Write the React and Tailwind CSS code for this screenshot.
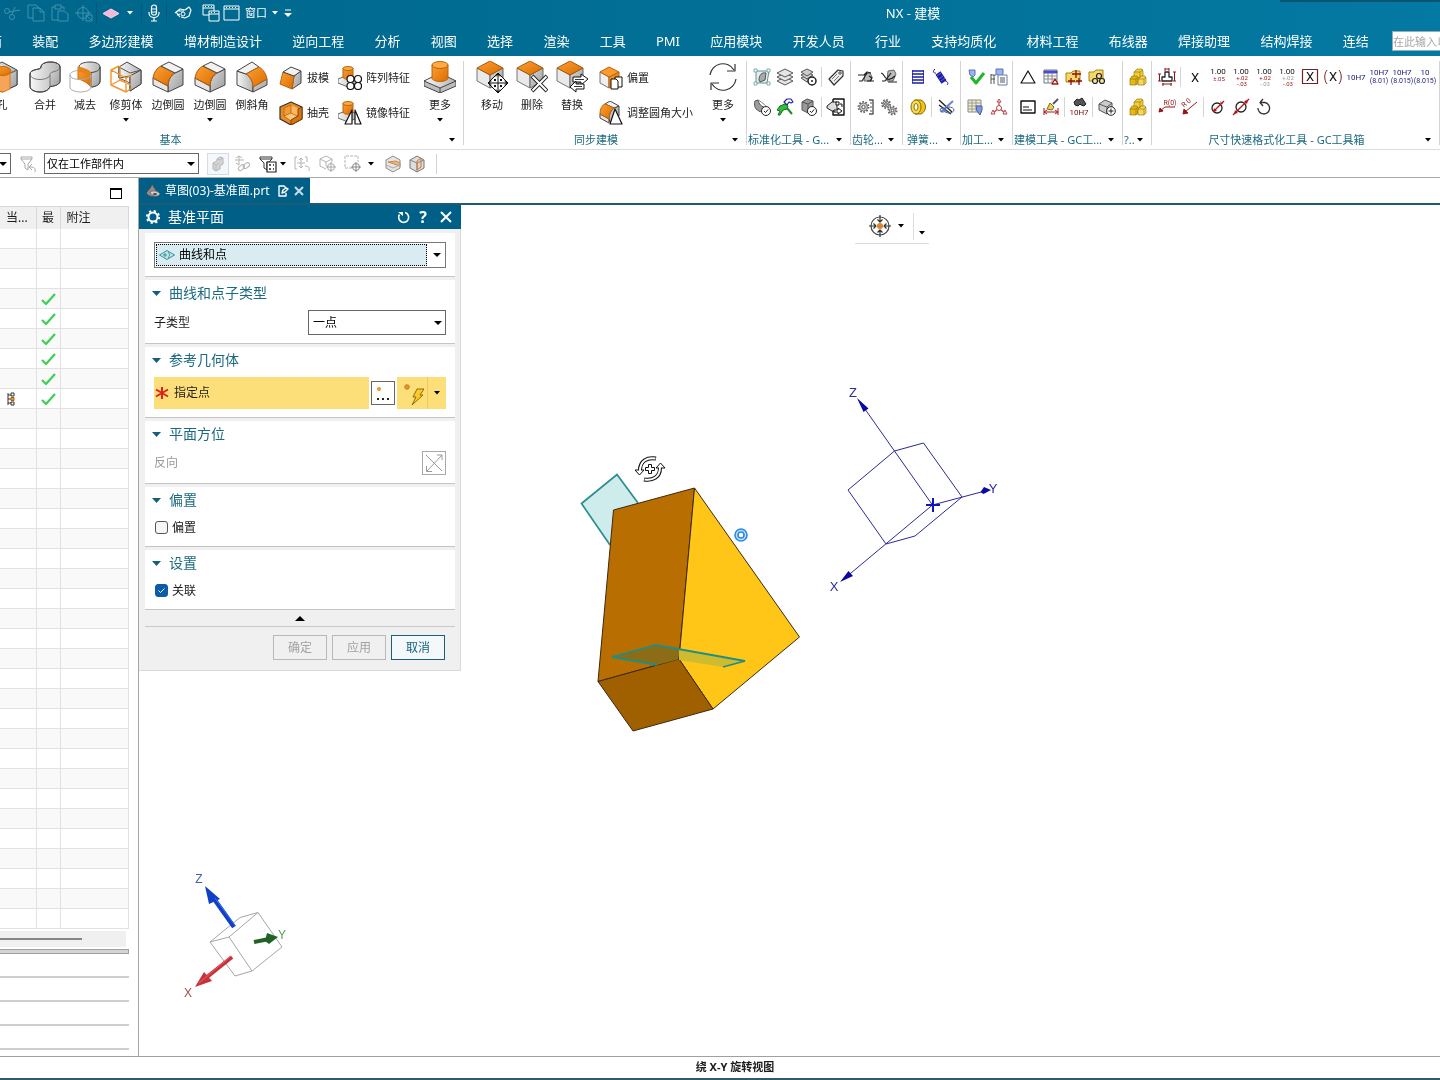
const MENUS = [
  '面', '装配', '多边形建模', '增材制造设计', '逆向工程', '分析', '视图', '选择', '渲染', '工具', 'PMI',
  '应用模块', '开发人员', '行业', '支持均质化', '材料工程', '布线器', '焊接助理', '结构焊接', '连结',
]

const ROWS = Array.from({ length: 35 }, (_, i) => ({
  done: i >= 3 && i <= 8,
  current: i === 8,
}))

function Defs() {
  return (
    <svg width="0" height="0" className="absolute" aria-hidden="true">
      <defs>
        <linearGradient id="metal" x1="0" x2="1" y1="0" y2="0">
          <stop offset="0" stopColor="#f7f7f7" />
          <stop offset="1" stopColor="#b4b4b4" />
        </linearGradient>
        <linearGradient id="steel" x1="0" x2="1" y1="0" y2="1">
          <stop offset="0" stopColor="#d9d9d9" />
          <stop offset="1" stopColor="#9c9c9c" />
        </linearGradient>
        <linearGradient id="amber" x1="0" x2="1" y1="0" y2="1">
          <stop offset="0" stopColor="#ffa033" />
          <stop offset="1" stopColor="#d96c00" />
        </linearGradient>
      </defs>
    </svg>
  )
}

function Svg({ size = 20, box, className = '', children }) {
  return (
    <svg
      width={size}
      height={size}
      viewBox={`0 0 ${box || size} ${box || size}`}
      className={`block shrink-0 ${className}`}
      fill="none"
      stroke="#444"
      strokeLinejoin="round"
      aria-hidden="true"
    >
      {children}
    </svg>
  )
}

function Caret({ className = 'text-black' }) {
  return (
    <svg width="6" height="4" viewBox="0 0 6 4" className={`block shrink-0 ${className}`} aria-hidden="true">
      <path d="M0 0h6L3 3.6z" fill="currentColor" />
    </svg>
  )
}

/* ---------- 32px ribbon icons ---------- */

function HoleIcon() {
  return (
    <Svg size={32}>
      <path d="M16 1 31 9v15l-15 7L1 24V9z" fill="url(#metal)" />
      <path d="M16 16v15l15-7V9z" fill="url(#steel)" />
      <path d="M1 9l15 7 15-7" stroke="#777" />
      <path d="M11 13v16l6 2 7-3V12z" fill="#f5a55a" stroke="#e07b12" />
      <ellipse cx="17" cy="10" rx="8" ry="4.500" fill="url(#amber)" stroke="#c96a0a" />
    </Svg>
  )
}

function UniteIcon() {
  return (
    <Svg size={32}>
      <path d="M1 13v12c0 3.500 4 6 10 6 5 0 9-2 10-5.500 6-.5 10-2.500 10-5.500V6c0-3-4-5-9.500-5S12 3 12 6c0 2-3 2-5.500 2.700C3 9.500 1 11 1 13z" fill="url(#metal)" />
      <path d="M21 14v11.500c6-.5 10-2.500 10-5.500V6c0 5-10 4-10 8z" fill="url(#steel)" stroke="none" />
      <path d="M1 13c0 3 4 5.500 10 5.500 5 0 10-2 10-5 0-3.500 10-2.500 10-7.500M21 14v11.500" stroke="#777" />
      <path d="M1 13v12c0 3.500 4 6 10 6 5 0 9-2 10-5.500 6-.5 10-2.500 10-5.500V6c0-3-4-5-9.500-5S12 3 12 6c0 2-3 2-5.500 2.700C3 9.500 1 11 1 13z" stroke="#444" />
    </Svg>
  )
}

function SubtractIcon() {
  return (
    <Svg size={32}>
      <path d="M10 6c0-3 4.500-5 11-5s10 2 10 5v14c0 3-3 5-8 6V16c0-4-6-6-13-6z" fill="url(#metal)" />
      <path d="M31 6c0 3-3 5-9 5.500V26c6-.5 9-3 9-6z" fill="url(#steel)" />
      <path d="M9 6c2 2 6 3 8 5 3 1 5 2 5 4v11c-3-4-8-7-13-8z" fill="url(#amber)" stroke="#cc6c08" />
      <path d="M9 6c4 0 11 2 13 5.500V15c-4-2-9-4-13-4z" fill="#e8821a" stroke="none" />
      <path d="M1 14c0 3 5 4.500 10.500 4.500S22 17 22 14v12c0 3-5 5-10.500 5S1 29 1 26zM1 14c0-2.500 3-4 8-4.500" stroke="#aaa" />
    </Svg>
  )
}

function TrimIcon() {
  return (
    <Svg size={32}>
      <path d="M9 6 17 1l14 8v14l-11 7V15L9 17z" fill="url(#metal)" />
      <path d="M20 15 31 9v14l-11 7z" fill="url(#steel)" />
      <path d="M9 6l11 6 11-3M9 6v11l11 5" stroke="#555" />
      <path d="M1 9l8-4M1 9v15l15 7V17zM16 17l6-3M16 31l6-4M1 24l9-5 11 5M10 5v14" stroke="#f0962c" strokeWidth="1.400" />
    </Svg>
  )
}

function BlendIcon({ size = 32 }) {
  return (
    <Svg size={size} box={32}>
      <path d="M16 31v-6c0-6 3-11 7-13l8-4v16z" fill="url(#steel)" />
      <path d="M1 17l15 8v6L1 24z" fill="#e6e6e6" />
      <path d="M1 17C2 11 5 7 9 5l14 7c-4 2-7 7-7 13z" fill="url(#amber)" stroke="#a85a0c" />
      <path d="M9 5l8-4 14 7-8 4z" fill="#f2f2f2" />
    </Svg>
  )
}

function ChamferIcon() {
  return (
    <Svg size={32}>
      <path d="M1 10l9 3c5 3 7 8 7 13v5L1 24z" fill="url(#metal)" />
      <path d="M1 10 16 1l7 5-13 7z" fill="#f2f2f2" />
      <path d="M17 26l14-8v6l-14 7z" fill="url(#steel)" />
      <path d="M10 13l13-7c5 3 7 7 8 12l-14 8c0-5-2-10-7-13z" fill="url(#amber)" stroke="#b8630c" />
    </Svg>
  )
}

function BossIcon({ size = 32 }) {
  return (
    <Svg size={size} box={32}>
      <path d="M0 20v5l16 7 16-7v-5z" fill="#bdbdbd" />
      <path d="M16 12l16 8-16 7-16-7z" fill="url(#metal)" />
      <path d="M16 27v5" />
      <path d="M8 4v13c0 2 4 3.500 8 3.500s8-1.500 8-3.500V4z" fill="url(#amber)" stroke="#b8630c" />
      <ellipse cx="16" cy="4" rx="8" ry="3.500" fill="#ffab42" stroke="#b8630c" />
    </Svg>
  )
}

function FaceCube() {
  return (
    <>
      <path d="M1 7v13l13 7V14z" fill="#e9e9e9" stroke="#777" />
      <path d="M27 7v13l-13 7V14z" fill="url(#steel)" stroke="#666" />
      <path d="M14 0l13 7-13 7L1 7z" fill="url(#amber)" stroke="#a85a0c" />
    </>
  )
}

function MoveFaceIcon() {
  return (
    <Svg size={32}>
      <FaceCube />
      <path d="M22 12l10 10-10 10-10-10z" fill="#fff" stroke="#111" />
      <path d="M22 13v18M13 22h18M20 15.500l2-2.500 2 2.500M20 28.500l2 2.500 2-2.500M15.500 20 13 22l2.500 2M28.500 20l2.500 2-2.500 2" stroke="#111" />
      <path d="M18 18h2v2h-2zM24 18h2v2h-2zM18 24h2v2h-2zM24 24h2v2h-2z" fill="#111" stroke="none" />
    </Svg>
  )
}

function DeleteFaceIcon() {
  return (
    <Svg size={32}>
      <FaceCube />
      <path d="M16 15l15 15M31 15 16 30" stroke="#222" strokeWidth="4" />
      <path d="M16.500 15.500l14 14M30.500 15.500l-14 14" stroke="#fff" strokeWidth="2" />
    </Svg>
  )
}

function ReplaceFaceIcon() {
  return (
    <Svg size={32}>
      <FaceCube />
      <path d="M17 16h8v-3l7 5-7 6v-3h-8z" fill="#fff" stroke="#111" />
      <path d="M28 23h-8v-3l-6 6 6 5v-3h8z" fill="#fff" stroke="#111" />
      <path d="M19 18.500h9M18 25.500h8" stroke="#333" />
    </Svg>
  )
}

function RefreshIcon() {
  return (
    <Svg size={32}>
      <g stroke="#333" strokeWidth="1.200">
        <path d="M3 14A13 13 0 0 1 27 9M29 18A13 13 0 0 1 5 23" />
        <path d="M28 3v7h-8M4 29v-7h8" />
      </g>
    </Svg>
  )
}

/* ---------- 24px ribbon icons ---------- */

function DraftIcon() {
  return (
    <Svg size={24}>
      <path d="M15 10l7-5v12l-9 6z" fill="url(#steel)" />
      <path d="M4 6l11 4-2 13L1 18z" fill="url(#amber)" stroke="#b8630c" />
      <path d="M4 6l8-5 10 4-7 5z" fill="#f2f2f2" />
    </Svg>
  )
}

function ShellIcon() {
  return (
    <Svg size={24}>
      <path d="M12 1l11 5v12l-11 6L1 18V6z" fill="#e98a22" stroke="#333" strokeWidth="1.200" />
      <path d="M12 4l8 4-1 6-7 4-7-4V7z" fill="#ffb65e" stroke="none" />
      <path d="M5 7l7-3v7c0 2-1 2-2 3l-5 1z" fill="#f39a38" stroke="#b8630c" strokeWidth=".8" />
      <path d="M5 15l7-3 8 4-8 4z" fill="#ffc67f" stroke="#b8630c" strokeWidth=".8" />
      <path d="M19 8l4-2v12l-11 6v-5l7-4z" fill="#d9750f" stroke="#7d4208" />
    </Svg>
  )
}

function PatternIcon() {
  return (
    <Svg size={24}>
      <path d="M0 13l10-4 9 4v4l-9 4-10-4z" fill="url(#metal)" stroke="#666" />
      <path d="M5 2v9c0 3 10 3 10 0V2z" fill="url(#amber)" stroke="#b8630c" />
      <ellipse cx="10" cy="2.500" rx="5" ry="2" fill="#ffab42" stroke="#b8630c" />
      <g fill="#fff" stroke="#111" strokeWidth="1.200">
        <circle cx="12.500" cy="13" r="3.500" />
        <circle cx="20" cy="13" r="3.500" />
        <circle cx="12.500" cy="20" r="3.500" />
        <circle cx="20" cy="20" r="3.500" />
      </g>
    </Svg>
  )
}

function MirrorIcon() {
  return (
    <Svg size={24}>
      <path d="M0 13l10-4 9 4v4l-9 4-10-4z" fill="url(#metal)" stroke="#666" />
      <path d="M5 2v9c0 3 10 3 10 0V2z" fill="url(#amber)" stroke="#b8630c" />
      <ellipse cx="10" cy="2.500" rx="5" ry="2" fill="#ffab42" stroke="#b8630c" />
      <path d="M14 9v14H7zM17 9v14h6z" fill="#fff" stroke="#111" strokeWidth="1.200" />
    </Svg>
  )
}

function OffsetIcon() {
  return (
    <Svg size={24}>
      <path d="M1 6v11l9 5V11z" fill="#eee" stroke="#777" />
      <path d="M20 6v11l-10 5V11z" fill="url(#amber)" stroke="#b8630c" />
      <path d="M10 1l10 5-10 5-9-5z" fill="#ff9a2e" stroke="#b8630c" />
      <path d="M16 11h7v10h-7z" fill="#fff" stroke="#111" />
      <path d="M12 13h5l2 2v8h-7z" fill="#fff" stroke="#111" />
    </Svg>
  )
}

function ResizeBlendIcon() {
  return (
    <Svg size={24}>
      <path d="M10 18c0-5 2-9 5-11l5-2v10l-9 6z" fill="url(#steel)" />
      <path d="M1 13l9 5v4l-9-5z" fill="#e6e6e6" />
      <path d="M6 3l5-3 9 5-5 2z" fill="#f2f2f2" />
      <path d="M1 13C1 8 3 4 6 3l9 4c-3 2-5 6-5 11z" fill="url(#amber)" stroke="#b8630c" />
      <path d="M16 8l-5 15h12z" fill="#fff" stroke="#111" strokeWidth="1.200" />
    </Svg>
  )
}

/* ---------- small tool icons, 18px grid ---------- */

const Gear = ({ x, y, r }) => (
  <g>
    <circle cx={x} cy={y} r={r} strokeWidth="2" strokeDasharray="1.600 1.500" stroke="#666" />
    <circle cx={x} cy={y} r={r - 1} fill="#cfcfcf" stroke="#777" />
    <circle cx={x} cy={y} r={r / 3} fill="#fff" stroke="#555" />
  </g>
)

const CheckBadge = () => (
  <>
    <circle cx="13" cy="13" r="4.500" fill="#fff" stroke="#222" />
    <path d="M11 13l1.500 1.600 2.700-3.200" stroke="#222" />
  </>
)

const GoldBoxes = () => (
  <g stroke="#8a6a00" strokeWidth=".6">
    <path d="M5 4l3-3h5l1 2v5l-3 2H5z" fill="#f3cf3c" />
    <path d="M1 11l2-3h5l1 2v5l-2 2H1z" fill="#e6b913" />
    <path d="M9 11l3-3h4l1 2v5l-2 2H9z" fill="#f6d95c" />
    <path d="M5 4h6v6M1 11h6v6M9 11h6v6M11 4l3-2M7 11l2-2M15 11l2-2" />
  </g>
)

function Small({ x, y, size, fill = '#111', children }) {
  return (
    <text x={x} y={y} fontSize={size} fill={fill} stroke="none" textAnchor="middle" fontFamily="Roboto, sans-serif">
      {children}
    </text>
  )
}

function Tolerance({ lower, tones = ['#9a1414', '#9a1414'] }) {
  return (
    <>
      <Small x={9} y={6} size={8}>1.00</Small>
      {lower.map((t, i) => (
        <Small key={t} x={10} y={(lower.length === 1 ? 13 : 12) + i * 6} size={6} fill={tones[i]}>{t}</Small>
      ))}
    </>
  )
}

function Fit({ top, lower }) {
  return (
    <>
      <Small x={9} y={7} size={8} fill="#1a1a7a">{top}</Small>
      <Small x={9} y={15} size={7} fill="#1a1a7a">{lower}</Small>
    </>
  )
}

const TOOL = {
  sketchRect: (
    <>
      <path d="M3 3h13l-2 12H3z" fill="#e3efef" stroke="#5c9696" />
      <path d="M6 12c0-5 3-8 7-7l-1 7-5 2z" fill="#aaa" stroke="#555" />
      <path d="M1 1h3v3H1zM14 1h3v3h-3zM1 14h3v3H1zM14 14h3v3h-3z" fill="#fff" stroke="#6a9a9a" strokeWidth=".8" />
    </>
  ),
  layers: (
    <g stroke="#555" fill="#e6e6e6">
      <path d="M9 9l8 4-8 4-8-4z" />
      <path d="M9 5l8 4-8 4-8-4z" />
      <path d="M9 1l8 4-8 4-8-4z" />
    </g>
  ),
  layersGear: (
    <>
      <g stroke="#555" fill="#ccc">
        <path d="M8 7l6 3-6 4-6-4z" />
        <path d="M8 4l6 3-6 4-6-4z" />
        <path d="M8 1l6 3-6 4-6-4z" />
      </g>
      <circle cx="13" cy="13" r="4" fill="#fff" stroke="#222" strokeWidth="1.500" />
      <circle cx="13" cy="13" r="1" fill="#222" stroke="none" />
    </>
  ),
  tag: (
    <>
      <path d="M2 11 11 2l5 1v5l-9 9z" fill="#eee" stroke="#333" strokeWidth="1.200" />
      <circle cx="13" cy="5" r="1.200" />
      <path d="M5 11l5-5M7 13l5-5" stroke="#777" />
    </>
  ),
  coneCheck: (
    <>
      <path d="M2 3C0 9 4 14 10 14l4-4C8 9 6 6 5 2z" fill="#9c9c9c" stroke="#555" />
      <path d="M5 2c2 1 8 5 9 8" stroke="#777" />
      <CheckBadge />
    </>
  ),
  greenArm: (
    <>
      <path d="M8 4l3-3h4l2 3-2 1-2-1-2 3z" fill="#fff" stroke="#2424a8" strokeWidth="1.200" />
      <path d="M1 12 4 8l5-2 3 2-1 3-4 1-3 5H2l2-4z" fill="#2fbf3a" stroke="#146b1c" />
      <path d="M11 10l5 6" stroke="#1d8a28" strokeWidth="2" />
    </>
  ),
  boxCheck: (
    <>
      <path d="M3 4l5-3 6 2v9l-5 3-6-3z" fill="#999" stroke="#555" />
      <path d="M3 4l6 2 5-3M9 6v9" stroke="#555" />
      <CheckBadge />
    </>
  ),
  tagExport: (
    <>
      <path d="M0 8l5-4h5v9H5L0 10z" fill="#ddd" stroke="#222" />
      <path d="M6 1h11v16H6v-4M6 4V1" stroke="#111" strokeWidth="1.400" />
      <path d="M9 4h3v3H9zM13 6h2v3M7 12h4v-2l4 3-4 3v-2H7z" fill="#fff" stroke="#111" />
    </>
  ),
  shaftA: (
    <g stroke="#222">
      <path d="M8 6l5-1 2 4-1 4H7z" fill="#bbb" stroke="#666" />
      <path d="M1 7h6l3-3 4 1M10 13h7M2 13h3l5-8M12 8l3 2-2 3" strokeWidth="1.200" />
    </g>
  ),
  shaftB: (
    <g stroke="#222">
      <path d="M8 3l6-1 2 4-3 7H7z" fill="#bbb" stroke="#666" />
      <path d="M1 5c3 0 3 5 6 6s5 0 8-3M2 13h3l6-8M8 14h9" strokeWidth="1.200" />
    </g>
  ),
  gearRack: (
    <>
      <Gear x={6.5} y={9} r={5} />
      <path d="M12 2h4v14h-4" stroke="#555" strokeWidth="1.400" />
      <path d="M13 5h2M13 9h2M13 13h2" stroke="#555" />
    </>
  ),
  gears: (
    <>
      <Gear x={6} y={6} r={4} />
      <Gear x={12.5} y={12.5} r={4} />
    </>
  ),
  coil: (
    <g stroke="#1c1ca8" strokeWidth="1.600">
      <path d="M3 3h12M3 6h12M3 9h12M3 12h12M3 15h12" />
      <path d="M3.500 2v13M14.500 2v13" strokeWidth=".8" />
    </g>
  ),
  spring: (
    <g stroke="#1c1ca8">
      <path d="M3 1c-3 2-1 5 1 4M15 17c2-2 0-4-2-4" />
      <path d="M6 5 12 14" strokeWidth="6" />
      <path d="M5 8l4-3M7 11l4-3M9 13l4-3" stroke="#7a7ae0" strokeWidth=".8" />
    </g>
  ),
  goldRoll: (
    <>
      <path d="M6 2h6c6 3 6 11 0 14H6z" fill="#f0c419" stroke="#8a6a00" />
      <ellipse cx="7" cy="9" rx="5" ry="7" fill="#f8dc4a" stroke="#8a6a00" />
      <ellipse cx="7" cy="9" rx="2" ry="3.500" fill="#fff" stroke="#8a6a00" />
    </>
  ),
  cutSpring: (
    <>
      <path d="M2 2l13 12M2 7l12 9" stroke="#222" strokeWidth="1.400" />
      <path d="M16 3 4 14" stroke="#6c86c8" strokeWidth="2" />
      <ellipse cx="12" cy="12" rx="5" ry="3" stroke="#4c68b0" />
      <ellipse cx="6" cy="12" rx="3" ry="2" stroke="#4c68b0" />
    </>
  ),
  checkTool: (
    <>
      <path d="M2 2h6v5l-2 2-3-2z" fill="#9fb4ea" stroke="#5a70b8" />
      <path d="M4 9l5 6 8-10" stroke="#22b52c" strokeWidth="3" />
    </>
  ),
  sheetTool: (
    <>
      <path d="M6 1h7v5l-3 2-4-2z" fill="#9fb4ea" stroke="#5a70b8" />
      <path d="M8 7h9v10H8z" fill="#fff" stroke="#667ab0" />
      <path d="M10 10h5M10 12h5M10 14h5M1 6v10M1 7h5M4 7v9M1 11h4" stroke="#555" />
    </>
  ),
  tableTool: (
    <>
      <path d="M1 2h13v12H1z" fill="#f3f0c8" stroke="#888" />
      <path d="M1 5h13M1 8h13M1 11h13M5 2v12M9 2v12" stroke="#999" />
      <path d="M9 8h6v4l-2 5-3-4z" fill="#7f96e0" stroke="#4a5cb0" />
    </>
  ),
  triadRed: (
    <g stroke="#b8434c">
      <path d="M9 9V2M9 10l-6 5M9 10l6 5" strokeWidth="1.200" />
      <path d="M7 4l2-3 2 3zM3 12l-2 4h4zM15 12l2 4h-4z" fill="#fff" />
      <circle cx="9" cy="10" r="2.500" fill="#fff" />
    </g>
  ),
  triangle: <path d="M9 3l7 12H2z" stroke="#111" strokeWidth="1.200" />,
  tableRed: (
    <>
      <path d="M2 2h13v13H2z" fill="#fff" stroke="#777" />
      <path d="M2 3h13v2H2z" fill="#4a4ad0" stroke="#4a4ad0" />
      <path d="M2 8h13M2 11h13M6 5v10M10 5v10" stroke="#888" />
      <path d="M13 11l3 5h-6z" fill="#fff" stroke="#b01515" strokeWidth="1.300" />
    </>
  ),
  folderStar: (
    <>
      <path d="M1 5h5l2-2h7v11H1z" fill="#f7d66a" stroke="#a98210" />
      <path d="M11 2v8M7 6h9M6 10v7M3 13h7M14 10v7M11 13h6" stroke="#8c1111" strokeWidth="1.300" />
    </>
  ),
  folderLink: (
    <>
      <path d="M1 4h5l2-2h7v11H1z" fill="#f7d66a" stroke="#a98210" />
      <g stroke="#222" strokeWidth="1.200" fill="#f3e3a0">
        <circle cx="11" cy="8" r="2.500" />
        <circle cx="7" cy="13" r="2.500" />
        <circle cx="14" cy="13" r="2.500" />
      </g>
    </>
  ),
  noteBox: (
    <>
      <path d="M2 3h14v12H2z" stroke="#111" strokeWidth="1.400" />
      <path d="M4 9h6M4 12h9" stroke="#111" strokeWidth="1.200" />
    </>
  ),
  dimBrush: (
    <>
      <path d="M16 1l-5 5" stroke="#556" strokeWidth="2" />
      <path d="M8 5l4 4-2 3-5-1z" fill="#e8cf62" stroke="#806a10" />
      <path d="M2 10v7M16 10v7M2 14h14M5 12l-3 2 3 2M13 12l3 2-3 2" stroke="#b01515" />
    </>
  ),
  binocular: (
    <>
      <path d="M4 4l3-3 2 1 3-2 2 3 2 3-2 2-3-1-1-1-2 2-3-1z" fill="#555" stroke="#222" />
      <Small x={9} y={17} size={8} fill="#7a0c0c">10H7</Small>
    </>
  ),
  cubeAdd: (
    <>
      <path d="M1 6l6-4 7 3v8l-5 3-8-4z" fill="#ccc" stroke="#555" />
      <path d="M1 6l8 3 5-4M9 9v7" stroke="#555" />
      <circle cx="13" cy="13" r="4.300" fill="#fff" stroke="#222" />
      <path d="M13 10.500v5M10.500 13h5" stroke="#222" />
    </>
  ),
  gold: <GoldBoxes />,
  dimension: (
    <>
      <path d="M7 4h4v5h3v4H4V9h3z" fill="#fff" stroke="#222" strokeWidth="1.300" />
      <path d="M7 1h4M7 0v3M11 0v3M0 6h3M0 13h3M1.500 6v7M15 4h3M15 13h3M16.500 4v9M4 16h10M5 15v3M13 15v3" stroke="#9a1414" />
    </>
  ),
  plainX: <Small x={9} y={14} size={13}>X</Small>,
  boxedX: (
    <>
      <path d="M1.500 1.500h15v14h-15z" stroke="#7a1f1f" strokeWidth="1.200" />
      <Small x={9} y={13} size={13}>X</Small>
    </>
  ),
  parenX: (
    <>
      <path d="M3 2C0 6 0 12 3 16M15 2c3 4 3 10 0 14" stroke="#7a1f1f" />
      <Small x={9} y={13} size={13}>X</Small>
    </>
  ),
  tolEqual: <Tolerance lower={['±.05']} />,
  tolBoth: <Tolerance lower={['+.02', '-.03']} />,
  tolUpper: <Tolerance lower={['+.02', '-.03']} tones={['#9a1414', '#999']} />,
  tolLower: <Tolerance lower={['+.02', '-.03']} tones={['#999', '#9a1414']} />,
  fit: <Small x={9} y={12} size={8} fill="#1a1a7a">10H7</Small>,
  fitTol: <Fit top="10H7" lower="(8.01)" />,
  fitTol2: <Fit top="10H7" lower="(8.015)" />,
  fitTol3: <Fit top="10" lower="(8.015)" />,
  leaderBox: (
    <>
      <Small x={12} y={7} size={7} fill="#9a1414">R(0)</Small>
      <path d="M17 9H7l-5 4" stroke="#9a1414" />
      <path d="M1 14l1-4 3 3z" fill="#9a1414" stroke="#9a1414" />
    </>
  ),
  leaderSlant: (
    <>
      <path d="M16 4 4 14" stroke="#9a1414" />
      <path d="M2 16l1-5 4 4z" fill="#9a1414" stroke="#9a1414" />
      <g transform="rotate(-42 8 8)"><Small x={8} y={6} size={7} fill="#9a1414">R 0</Small></g>
    </>
  ),
  diaIn: (
    <>
      <circle cx="8" cy="10" r="5" stroke="#222" strokeWidth="1.300" />
      <path d="M5 13 15 3" stroke="#b01515" strokeWidth="1.200" />
      <path d="M4 14l1-4 3 3zM12 6l-1-3 3 3z" fill="#b01515" stroke="none" />
    </>
  ),
  diaOut: (
    <>
      <circle cx="9" cy="9" r="5" stroke="#222" strokeWidth="1.300" />
      <path d="M1 17 17 1" stroke="#b01515" strokeWidth="1.200" />
      <path d="M2 16l1-4 3 3zM16 2l-4 1 3 3z" fill="#b01515" stroke="none" />
    </>
  ),
  undo: (
    <>
      <path d="M5 4.500h5a5.800 5.800 0 1 1-7 5.500" stroke="#333" strokeWidth="1.300" />
      <path d="M8 1 5 4.500 8 8" stroke="#333" strokeWidth="1.300" />
    </>
  ),
}

/* ---------- ribbon ---------- */

function BigButton({ icon, label, menu, className = 'w-10' }) {
  return (
    <button type="button" className={`flex shrink-0 flex-col items-center pt-[5px] ${className}`}>
      {icon}
      <span className="mt-1 h-4 text-[11px] leading-4 whitespace-nowrap">{label}</span>
      {menu && <span className="mt-[5px]"><Caret /></span>}
    </button>
  )
}

function SmallButton({ icon, label }) {
  return (
    <button type="button" className="flex h-[35px] items-center gap-1 text-[11px] leading-4 whitespace-nowrap">
      {icon}
      {label}
    </button>
  )
}

function Group({ label, className, labelClass = 'text-center', children }) {
  return (
    <section className={`flex flex-col overflow-hidden ${className}`}>
      <div className="flex h-[76px] shrink-0">{children}</div>
      <div className="flex h-4 items-center pr-2">
        <span className={`min-w-0 flex-1 overflow-hidden text-[11px] leading-4 whitespace-nowrap text-[#1c6a80] ${labelClass}`}>{label}</span>
        <button type="button" aria-label={`${label} 选项`}><Caret /></button>
      </div>
    </section>
  )
}

function Divider() {
  return <div className="mt-[5px] mb-1 w-px shrink-0 bg-[#d4d4d4]" />
}

function ToolGrid({ rows }) {
  return (
    <div className="flex flex-col pt-[6px] pl-[3px]">
      {rows.map((row, r) => (
        <div key={r} className="flex h-[30px] items-center">
          {row.map((name, i) =>
            name === '|' ? (
              <span key={i} className="flex w-[5px] justify-center"><span className="h-5 w-px bg-[#d4d4d4]" /></span>
            ) : (
              <button key={i} type="button" aria-label={name} className="flex w-[23px] justify-center">
                <Svg size={18} className="overflow-visible">{TOOL[name]}</Svg>
              </button>
            ),
          )}
        </div>
      ))}
    </div>
  )
}

function Ribbon() {
  return (
    <div className="flex h-[94px] overflow-hidden border-b border-[#dcdcdc] bg-white">
      <Group label="基本" className="w-[463px] shrink-0" labelClass="pr-[108px] text-center">
        <BigButton icon={<HoleIcon />} label="孔" className="-ml-[21px] w-[46px]" />
        <BigButton icon={<UniteIcon />} label="合并" />
        <BigButton icon={<SubtractIcon />} label="减去" />
        <BigButton icon={<TrimIcon />} label="修剪体" menu className="w-[42px]" />
        <BigButton icon={<BlendIcon />} label="边倒圆" className="w-[42px]" />
        <BigButton icon={<BlendIcon />} label="边倒圆" menu className="w-[42px]" />
        <BigButton icon={<ChamferIcon />} label="倒斜角" className="w-[42px]" />
        <div className="ml-[6px] flex flex-col pt-1">
          <SmallButton icon={<DraftIcon />} label="拔模" />
          <SmallButton icon={<ShellIcon />} label="抽壳" />
        </div>
        <div className="mr-[10px] ml-[9px] flex flex-col pt-1">
          <SmallButton icon={<PatternIcon />} label="阵列特征" />
          <SmallButton icon={<MirrorIcon />} label="镜像特征" />
        </div>
        <BigButton icon={<BossIcon />} label="更多" menu />
      </Group>
      <Divider />
      <Group label="同步建模" className="w-[282px] shrink-0" labelClass="pr-1 text-center">
        <div className="ml-2 flex">
          <BigButton icon={<MoveFaceIcon />} label="移动" />
          <BigButton icon={<DeleteFaceIcon />} label="删除" />
          <BigButton icon={<ReplaceFaceIcon />} label="替换" />
        </div>
        <div className="mr-[10px] ml-[7px] flex flex-col pt-1">
          <SmallButton icon={<OffsetIcon />} label="偏置" />
          <SmallButton icon={<ResizeBlendIcon />} label="调整圆角大小" />
        </div>
        <BigButton icon={<RefreshIcon />} label="更多" menu />
      </Group>
      <Divider />
      <Group label="标准化工具 - G..." className="w-[103px] shrink-0" labelClass="pl-px">
        <ToolGrid rows={[['sketchRect', 'layers', 'layersGear', '|', 'tag'], ['coneCheck', 'greenArm', 'boxCheck', '|', 'tagExport']]} />
      </Group>
      <Divider />
      <Group label="齿轮..." className="w-[51px] shrink-0" labelClass="pl-px">
        <ToolGrid rows={[['shaftA', 'shaftB'], ['gearRack', 'gears']]} />
      </Group>
      <Divider />
      <Group label="弹簧..." className="w-[57px] shrink-0" labelClass="pl-1">
        <ToolGrid rows={[['coil', 'spring'], ['goldRoll', '|', 'cutSpring']]} />
      </Group>
      <Divider />
      <Group label="加工..." className="w-[51px] shrink-0" labelClass="pl-px">
        <ToolGrid rows={[['checkTool', 'sheetTool'], ['tableTool', 'triadRed']]} />
      </Group>
      <Divider />
      <Group label="建模工具 - GC工..." className="w-[109px] shrink-0" labelClass="pl-px">
        <ToolGrid rows={[['triangle', 'tableRed', 'folderStar', 'folderLink'], ['noteBox', 'dimBrush', '|', 'binocular', '|', 'cubeAdd']]} />
      </Group>
      <Divider />
      <Group label="?.." className="w-[28px] shrink-0" labelClass="pl-px">
        <ToolGrid rows={[['gold'], ['gold']]} />
      </Group>
      <Divider />
      <Group label="尺寸快速格式化工具 - GC工具箱" className="min-w-0 flex-1" labelClass="pr-1 text-center">
        <ToolGrid
          rows={[
            ['dimension', '|', 'plainX', 'tolEqual', 'tolBoth', 'tolUpper', 'tolLower', 'boxedX', 'parenX', 'fit', 'fitTol', 'fitTol2', 'fitTol3'],
            ['leaderBox', 'leaderSlant', '|', 'diaIn', 'diaOut', 'undo'],
          ]}
        />
      </Group>
      <Divider />
    </div>
  )
}

/* ---------- title bar ---------- */

function IconButton({ label, className = 'w-6', children }) {
  return (
    <button type="button" aria-label={label} className={`flex h-full shrink-0 items-center justify-center ${className}`}>
      {children}
    </button>
  )
}

function Header() {
  return (
    <header className="relative overflow-hidden bg-linear-to-r from-[#00668b] to-[#0479a2] text-white">
      <div className="absolute top-0 right-0 h-0.5 w-40 bg-[#0a5672]" />
      <div className="flex h-[26px] items-center">
        <div className="flex h-full items-center text-[#3f93ae]">
          <IconButton label="剪切">
            <Svg size={18}>
              <g stroke="currentColor"><circle cx="4" cy="7" r="2.500" /><circle cx="9" cy="13" r="2.500" /><path d="M6 8l11-2M9 10 12 3" /></g>
            </Svg>
          </IconButton>
          <IconButton label="复制">
            <Svg size={18}>
              <path d="M6 14H1V1h8l2 2v2M6 4h7l4 4v9H6zM13 4v4h4" stroke="currentColor" />
            </Svg>
          </IconButton>
          <IconButton label="粘贴">
            <Svg size={18}>
              <path d="M7 16H1V3h3V1h6v2h3v3M4 3v2h6V3M7 7h6l4 3v7H7z" stroke="currentColor" />
            </Svg>
          </IconButton>
          <IconButton label="移动">
            <Svg size={18}>
              <g stroke="currentColor"><circle cx="8" cy="9" r="5.500" /><path d="M8 1v16M0 9h16M11 11h6v6h-6zM12 12l4 4" /></g>
            </Svg>
          </IconButton>
        </div>
        <span className="h-5 w-px bg-[#00587a]" />
        <IconButton label="基准平面" className="w-7">
          <Svg size={16}><path d="M8 4l8 4.500L8 13 0 8.500z" fill="#f3b9d6" stroke="#f7d3e5" /></Svg>
        </IconButton>
        <IconButton label="更多平面" className="w-[10px]"><Caret className="text-white" /></IconButton>
        <span className="ml-[6px] h-5 w-px bg-[#00587a]" />
        <IconButton label="语音">
          <Svg size={18}>
            <g stroke="#fff" strokeWidth="1.200"><rect x="6.500" y="1" width="5" height="10" rx="2.500" /><path d="M4 8v1c0 6 10 6 10 0V8M9 14v3M6 17h6M7 5h4M7 8h4" /></g>
          </Svg>
        </IconButton>
        <span className="h-5 w-px bg-[#00587a]" />
        <IconButton label="触控" className="w-8">
          <Svg size={18}>
            <path d="M1 9l5-4 5 1 4-3 2 3-2 6-4 2-4-1M2 8l4 5M4 7h6M3 11l3-1" stroke="#fff" strokeWidth="1.200" />
            <circle cx="9" cy="10" r="2" stroke="#fff" />
          </Svg>
        </IconButton>
        <IconButton label="层叠窗口" className="w-6">
          <Svg size={18}>
            <path d="M1 1h11v10H1zM1 4h11M3 2.500h1M6 2.500h1M9 2.500h1" stroke="#fff" />
            <path d="M7 7h10v10H7z" fill="#006a8f" stroke="#fff" />
            <path d="M7 10h10M9 8.500h1M12 8.500h1" stroke="#fff" />
          </Svg>
        </IconButton>
        <button type="button" className="flex h-full items-center gap-1 text-[11px] leading-4">
          <Svg size={18}><path d="M1 2h15v14H1zM1 5h15M3 3.500h1M6 3.500h1M9 3.500h1M12 3.500h1" stroke="#fff" /></Svg>
          窗口
          <Caret className="ml-px text-white" />
        </button>
        <IconButton label="自定义" className="w-5">
          <Svg size={8}><path d="M1 1h6" stroke="#fff" /><path d="M0 4h8L4 8z" fill="#fff" stroke="none" /></Svg>
        </IconButton>
        <h1 className="flex-1 pl-[88px] text-center text-[13px] leading-5">NX - 建模</h1>
      </div>
      <div className="flex h-[30px] items-center">
        <nav className="-ml-[11px] flex min-w-0 flex-1 justify-between pr-[23px]">
          {MENUS.map((m) => (
            <a key={m} href="#" className="text-[13px] leading-5 whitespace-nowrap">{m}</a>
          ))}
        </nav>
        <input
          type="text"
          aria-label="搜索命令"
          placeholder="在此输入以搜索"
          className="h-5 w-12 border border-r-0 border-[#9ab] bg-white text-[11px] text-black placeholder:text-[#a8a8a8]"
        />
      </div>
    </header>
  )
}

/* ---------- selection bar ---------- */

function CaretLarge() {
  return (
    <svg width="8" height="4" viewBox="0 0 8 4" className="block" aria-hidden="true"><path d="M0 0h8L4 4z" /></svg>
  )
}

function Select({ label, value, className, selectClass = '' }) {
  return (
    <div className={`relative shrink-0 ${className}`}>
      <select aria-label={label} className={`block size-full appearance-none border border-[#666] bg-white leading-4 text-black ${selectClass}`}>
        <option>{value}</option>
      </select>
      <span className="pointer-events-none absolute inset-y-0 right-[4px] flex items-center"><CaretLarge /></span>
    </div>
  )
}

function SelectionBar() {
  return (
    <div className="flex h-7 items-center border-b border-[#aaa] bg-white">
      <Select label="类型过滤器" value="" className="-ml-[30px] h-[21px] w-[41px]" selectClass="pl-1 text-[11px]" />
      <IconButton label="重置过滤器" className="w-[33px]">
        <Svg size={18}>
          <path d="M2 2h11v2L9 9v6l-3-2V9L2 4zM2 4h11" stroke="#a8a8a8" />
          <path d="M16 17c1-4-1-5-5-5M13 9l-3 3 3 3" stroke="#a8a8a8" />
        </Svg>
      </IconButton>
      <Select label="选择范围" value="仅在工作部件内" className="h-[21px] w-[155px]" selectClass="pl-[2px] text-[11px]" />
      <button type="button" aria-label="整个装配" className="ml-2 flex size-[22px] items-center justify-center border border-[#d3dbe6] bg-[#f4f7fb]">
        <Svg size={16}>
          <path d="M3 7l4-2V3l3-2 3 1v6l-3 2v3l-4 2-3-2z" fill="#d6d6d6" stroke="#b4b4b4" />
          <path d="M3 7l3 2 4-2M7 3l3 1 3-2M6 9v6" stroke="#bbb" />
        </Svg>
      </button>
      <IconButton label="链接" className="w-[26px]">
        <Svg size={18}>
          <path d="M6 1v9M2 5h9M3 3l3-2 3 2M3 8l3 2" stroke="#b4b4b4" />
          <rect x="5" y="11" width="7" height="4" rx="2" transform="rotate(-40 8 13)" stroke="#b4b4b4" />
          <rect x="10" y="9" width="7" height="4" rx="2" transform="rotate(-40 13 11)" stroke="#b4b4b4" />
        </Svg>
      </IconButton>
      <IconButton label="过滤器列表" className="w-[25px]">
        <Svg size={18}>
          <path d="M1 2h12v2L10 7H8v8l-3-2V8L1 4zM1 4h12" stroke="#333" />
          <path d="M8 7h9v10H8z" fill="#fff" stroke="#222" strokeWidth="1.200" />
          <path d="M10 10h2M10 14h2M14 10h1M14 14h1" stroke="#222" strokeWidth="1.400" />
        </Svg>
      </IconButton>
      <Caret />
      <IconButton label="捕捉点" className="w-8">
        <Svg size={18}>
          <path d="M4 2H2v12h2M12 2h2v5M8 3v10M4 8h8M6 5l2-2 2 2M6 11l2 2 2-2" stroke="#b4b4b4" />
          <path d="M16 16c1-4-1-5-4-5" stroke="#b4b4b4" />
        </Svg>
      </IconButton>
      <IconButton label="捕捉体" className="w-5">
        <Svg size={18}>
          <path d="M1 4l6-3 6 3v3M1 4v7l6 3M1 4l6 3 6-3M7 7v4" stroke="#b4b4b4" />
          <circle cx="12" cy="12" r="3.500" stroke="#aaa" /><path d="M12 7v10M7 12h10" stroke="#aaa" />
        </Svg>
      </IconButton>
      <IconButton label="捕捉面" className="w-[30px]">
        <Svg size={18}>
          <path d="M8 13H1V1h13v6" stroke="#b4b4b4" strokeDasharray="3 1" />
          <circle cx="12" cy="12" r="3.500" stroke="#888" /><path d="M12 7v10M7 12h10" stroke="#888" />
        </Svg>
      </IconButton>
      <Caret />
      <IconButton label="截面" className="ml-[7px] w-6">
        <Svg size={18}>
          <path d="M9 1l7 4v8l-7 4-7-4V5z" fill="#e6e6e6" stroke="#8c8c8c" />
          <path d="M4 7l8-1 4 2v3z" fill="#f3b27a" stroke="#c98a50" />
          <path d="M2 10l7 3 7-3" stroke="#aaa" />
        </Svg>
      </IconButton>
      <IconButton label="编辑截面" className="w-6">
        <Svg size={18}>
          <path d="M9 1l7 4v8l-7 4-7-4V5z" fill="#ddd" stroke="#777" />
          <path d="M9 6l4-3v9l-4 3z" fill="#f6d0ac" stroke="#c57a38" />
          <path d="M2 5l7 3 7-3M9 8v9" stroke="#888" />
        </Svg>
      </IconButton>
      <span className="ml-[7px] h-5 w-px bg-[#d4d4d4]" />
    </div>
  )
}

/* ---------- left navigator ---------- */

function Navigator() {
  return (
    <aside className="flex w-[139px] shrink-0 flex-col border-r border-[#a6a6a6] bg-white pr-[9px]">
      <div className="flex h-[28px] items-center justify-end pt-[3px] pr-[7px]">
        <button type="button" aria-label="最大化" className="h-[11px] w-3 border border-t-2 border-black" />
      </div>
      <table className="w-[129px] table-fixed border-collapse text-xs">
        <thead>
          <tr className="h-[22px] border-t border-[#d8d8d8] bg-[#f0f0f0]">
            <th className="w-9 border-r border-[#d8d8d8] py-0 pr-0 pl-[6px] text-left leading-4 font-normal whitespace-nowrap">当...</th>
            <th className="w-6 border-r border-[#d8d8d8] p-0 leading-4 font-normal">最</th>
            <th className="border-r border-[#d8d8d8] py-0 pr-0 pl-[6px] text-left leading-4 font-normal">附注</th>
          </tr>
        </thead>
        <tbody>
          {ROWS.map((row, i) => (
            <tr key={i} className="h-5 border-b border-[#e2e2e2] even:bg-[#f9f9f9]">
              <td className="border-r border-[#e2e2e2] p-0 pl-[6px]">
                {row.current && (
                  <Svg size={14}>
                    <path d="M2 1v12M2 3h3M2 11h3M2 7h3" stroke="#333" />
                    <path d="M5 1h3v3H5zM5 10h3v3H5z" stroke="#333" />
                    <path d="M5 5.500h3v3H5z" fill="#f09a30" stroke="#a86010" />
                  </Svg>
                )}
              </td>
              <td className="border-r border-[#e2e2e2] p-0">
                {row.done && (
                  <Svg size={16} className="mx-auto"><path d="M2 9l4 4 9-10" stroke="#3fcf55" strokeWidth="2.200" /></Svg>
                )}
              </td>
              <td className="border-r border-[#e2e2e2] p-0" />
            </tr>
          ))}
        </tbody>
      </table>
      <div className="mt-0.5 mr-[3px] flex h-4 shrink-0 items-center bg-[#f0f0f0]">
        <div className="h-0.5 w-[82px] bg-[#868686]" />
      </div>
      <div className="mt-[2px] h-[5px] shrink-0 border border-l-0 border-[#a0a0a0] bg-[#d4d4d4]" />
      {[0, 1, 2, 3].map((i) => (
        <div key={i} className="h-6 shrink-0 border-b-2 border-[#cfcfcf]" />
      ))}
    </aside>
  )
}

/* ---------- datum plane dialog ---------- */

function Section({ title, children }) {
  return (
    <section className="border-b border-[#c4c4c4] bg-white px-[9px] pb-2">
      <h3 className="h-[26px] text-sm leading-[26px] text-[#1c6a80]">
        <button type="button" className="-ml-[2px] flex items-center gap-2 text-left">
          <svg width="9" height="5" viewBox="0 0 9 5" aria-hidden="true"><path d="M0 0h9L4.500 5z" fill="#145f7c" /></svg>
          {title}
        </button>
      </h3>
      <div className="pt-1">{children}</div>
    </section>
  )
}

function Check({ label, defaultChecked }) {
  return (
    <label className="flex h-[21px] items-center gap-1 text-xs leading-4">
      <span className="relative ml-px block size-[13px]">
        <input
          type="checkbox"
          defaultChecked={defaultChecked}
          className="peer block size-[13px] appearance-none rounded-[3px] border border-[#555] bg-[#f6f6f6] checked:border-[#0a5ca8] checked:bg-[#0a5ca8]"
        />
        <svg width="13" height="13" viewBox="0 0 13 13" className="pointer-events-none absolute inset-0 hidden peer-checked:block" aria-hidden="true">
          <path d="M3.500 6.500l2 2 4-4" fill="none" stroke="#fff" />
        </svg>
      </span>
      {label}
    </label>
  )
}

function Dialog() {
  return (
    <div role="dialog" aria-label="基准平面" className="absolute top-0 left-0 w-[322px] border-r border-b border-[#dadada] bg-[#f0f0f0] text-xs">
      <div className="-mr-px flex h-6 items-center bg-[#005f87] pr-2 pl-[6px] text-white">
        <Svg size={16}>
          <circle cx="8" cy="8" r="4.500" stroke="#fff" strokeWidth="2" />
          <circle cx="8" cy="8" r="6.200" stroke="#fff" strokeWidth="1.800" strokeDasharray="2.200 2.670" />
        </Svg>
        <h2 className="ml-[7px] flex-1 text-sm leading-5">基准平面</h2>
        <button type="button" aria-label="重置">
          <Svg size={14}>
            <path d="M3.500 4.500A5 5 0 1 0 9 2.500" stroke="#fff" strokeWidth="1.600" />
            <path d="M2 2h5v4z" fill="#fff" stroke="none" />
          </Svg>
        </button>
        <button type="button" aria-label="帮助" className="w-[26px] text-center text-base leading-5 font-bold">?</button>
        <button type="button" aria-label="关闭" className="ml-[3px]">
          <Svg size={14}><path d="M2 2l10 10M12 2 2 12" stroke="#fff" strokeWidth="2" /></Svg>
        </button>
      </div>
      <div className="flex flex-col gap-[3px] pt-1 pr-[5px] pl-[6px]">
        <section className="border-b border-[#c4c4c4] bg-white px-[9px] pt-[9px] pb-2">
          <div className="relative h-[26px]">
            <select aria-label="类型" className="block size-full appearance-none border border-[#777] bg-white pl-6 leading-4 text-black">
              <option>曲线和点</option>
            </select>
            <span className="pointer-events-none absolute inset-y-[2px] right-[19px] left-[2px] border border-dotted border-black bg-[#d9ecf1] mix-blend-multiply" />
            <span className="pointer-events-none absolute top-[5px] left-[5px]">
              <Svg size={16}>
                <path d="M8 3.500l7.500 4.500L8 12.500.5 8z" fill="#bfe6ea" stroke="#3a8f96" />
                <path d="M4 8h4M6 6v4M9 5c2 2 2 4 0 6" stroke="#3a8f96" />
              </Svg>
            </span>
            <span className="pointer-events-none absolute top-[11px] right-[5px]"><CaretLarge /></span>
          </div>
        </section>
        <Section title="曲线和点子类型">
          <div className="flex h-[25px] items-center justify-between">
            <span>子类型</span>
            <Select label="子类型" value="一点" className="h-[25px] w-[138px]" selectClass="pl-1 text-xs" />
          </div>
        </Section>
        <Section title="参考几何体">
          <div className="flex h-8 items-center gap-[2px]">
            <button type="button" className="flex h-full flex-1 items-center gap-1 bg-[#fddf7a] text-left leading-4">
              <Svg size={16}><path d="M8 2v12M2 4.500l12 7M14 4.500l-12 7" stroke="#e01f1f" strokeWidth="2" /></Svg>
              指定点
            </button>
            <button type="button" aria-label="点对话框" className="border border-[#666] bg-white">
              <Svg size={22}>
                <circle cx="7" cy="7" r="2" fill="#e8942e" stroke="none" />
                <path d="M5 17h2M10 17h2M15 17h2" stroke="#222" strokeWidth="2" />
              </Svg>
            </button>
            <div className="flex h-full bg-[#fddf7a]">
              <button type="button" aria-label="自动判断的点" className="flex w-[31px] items-center justify-center border-r border-[#ecc95a]">
                <Svg size={24}>
                  <circle cx="7" cy="6" r="2.300" fill="#e8942e" stroke="#b8731c" strokeWidth=".8" />
                  <path d="M17 8h7l-4 6h3L12 24l4-8h-3z" fill="#ffc928" stroke="#8a6a10" />
                </Svg>
              </button>
              <button type="button" aria-label="点类型" className="flex w-[18px] items-center justify-center"><Caret /></button>
            </div>
          </div>
        </Section>
        <Section title="平面方位">
          <div className="flex h-6 items-center justify-between text-[#9a9a9a]">
            <span>反向</span>
            <button type="button" aria-label="反向" disabled className="border border-[#a8a8a8]">
              <Svg size={22}><path d="M3 3l16 16M19 3 4 19M14 3h5v5M3.500 14v5.500H9" stroke="#9a9a9a" /></Svg>
            </button>
          </div>
        </Section>
        <Section title="偏置"><Check label="偏置" /></Section>
        <Section title="设置"><Check label="关联" defaultChecked /></Section>
      </div>
      <div className="mr-[5px] ml-[6px] flex h-[17px] items-center justify-center border-b border-[#c8c8c8]">
        <button type="button" aria-label="折叠"><svg width="10" height="5" viewBox="0 0 10 5" className="block" aria-hidden="true"><path d="M0 5h10L5 0z" /></svg></button>
      </div>
      <div className="flex justify-end gap-[5px] pt-2 pr-[15px] pb-[10px]">
        <button type="button" disabled className="h-[25px] w-[54px] border border-[#b8b8b8] text-[#a2a2a2]">确定</button>
        <button type="button" disabled className="h-[25px] w-[54px] border border-[#b8b8b8] text-[#a2a2a2]">应用</button>
        <button type="button" className="h-[25px] w-[54px] border border-[#1b5f78] bg-[#f3f9fb] text-[#145f7c]">取消</button>
      </div>
    </div>
  )
}

/* ---------- graphics window ---------- */

function Scene() {
  return (
    <svg width="1301" height="851" viewBox="139 205 1301 851" className="absolute top-0 left-0 font-['Liberation_Sans',sans-serif] text-[13px]" fill="none" aria-hidden="true">
      <path d="M617 474.500 638 503 610 545 581.500 503.500z" fill="#cfecec" />
      <path d="M638 503 617 474.500 581.500 503.500 610 545" stroke="#2b8e90" strokeWidth="1.700" />
      <g stroke="#3b2a12" strokeLinejoin="round">
        <path d="M613.500 510 694.500 488 679 659 598 681.500z" fill="#b86e00" />
        <path d="M694.500 488 799.500 637 713 709 679 659z" fill="#ffc617" />
        <path d="M598 681.500 679 659 713 709 633 731z" fill="#a06000" />
      </g>
      <path d="M612 657 656 645 679 649 678 659.500 657 665z" fill="#8c6c16" />
      <path d="M679 649 745 661 723 667 679 660z" fill="#cfbb30" />
      <path d="M657 665 612 657 656 645 745 661 723 667" stroke="#1f8f84" strokeWidth="1.800" />
      <circle cx="741" cy="535" r="6" fill="#bfe0fa" stroke="#2b8be6" strokeWidth="1.600" />
      <circle cx="741" cy="535" r="3" fill="#fff" stroke="#2b8be6" strokeWidth="1.600" />

      {/* rotate cursor */}
      <g transform="translate(650 469)" strokeLinejoin="round">
        <g stroke="#111" strokeWidth="4">
          <path d="M-10 1C-10-8-3-12 6-10.500M10-1C10 8 3 12-6 10.500" />
        </g>
        <path d="M-15 1h9l-4.500 5zM15-1H6l4.500-5z" fill="#fff" stroke="#111" />
        <g stroke="#fff" strokeWidth="2">
          <path d="M-10 2C-10-8-3-12 5.500-10.500M10-2C10 8 3 12-5.500 10.500" />
        </g>
        <path d="M-1.500-4.500h3v3h3v3h-3v3h-3v-3h-3v-3h3z" fill="#fff" stroke="#111" />
      </g>

      {/* datum coordinate system */}
      <g stroke="#2a2a98">
        <path d="M932.500 505 860 402M932.500 505 845 578M932.500 505 985 491" />
        <path d="M894.500 451 923.500 443 962 497 915 536 886 544 848 490z" />
      </g>
      <g fill="#0a0aa0">
        <path d="M857 398 868.500 408.500 863.500 412zM840 582 848.500 571 853 576zM991 490 984 487 980.500 492 983.500 494z" />
      </g>
      <path d="M926 505h14M933 498v14" stroke="#1212c0" strokeWidth="2" />
      <g fill="#2a2a98" textAnchor="middle">
        <text x="853" y="397">Z</text>
        <text x="993" y="493">Y</text>
        <text x="834" y="591">X</text>
      </g>

      {/* view triad */}
      <g stroke="#a6a6a6">
        <path d="M210 942 240 917.500 258 912.500 282 947 252 971 235 976z" />
        <path d="M210 942 229 937 258 912.500M229 937 252 971" />
      </g>
      <path d="M234 927 212 896" stroke="#1040c8" strokeWidth="4.500" />
      <path d="M205 886 220 899 209 904z" fill="#1040c8" />
      <path d="M235 925.500 215 898" stroke="#3f6cf0" />
      <path d="M232 957 207 977" stroke="#c8303a" strokeWidth="4" />
      <path d="M195 987 204 972 212 981z" fill="#c8303a" />
      <path d="M231 956 199 983" stroke="#e8606a" />
      <path d="M254 942 269 939" stroke="#1f6424" strokeWidth="4" />
      <path d="M278 937 267 933 265 941 269 944z" fill="#1f6424" />
      <g textAnchor="middle" fontSize="12">
        <text x="199" y="883" fill="#4a5cb0">Z</text>
        <text x="282" y="939" fill="#4fa25a">Y</text>
        <text x="188" y="997" fill="#b0424c">X</text>
      </g>
    </svg>
  )
}

function Viewport() {
  return (
    <main className="flex min-w-0 flex-1 flex-col">
      <div className="flex h-[25px] shrink-0">
        <div className="flex items-center bg-[#005f87] pr-[6px] pl-[6px] text-white">
          <Svg size={16}>
            <path d="M7 1c-1 4-4 6-6 9 2 4 9 5 13 2z" fill="#8c8c8c" stroke="#4a4a4a" />
            <path d="M5 9c3-2 8-1 10 2-2 3-8 3-10-2z" fill="#d0d0d0" stroke="#777" />
            <ellipse cx="10" cy="11" rx="2" ry="1" fill="#444" stroke="none" />
          </Svg>
          <span className="ml-1 text-xs leading-5">草图(03)-基准面.prt</span>
          <Svg size={12} className="ml-[7px]"><path d="M9 8v3H2V1h5l2 2M5 8l1-3 3-2 2 1-3 3z" stroke="#fff" strokeWidth="1.400" /></Svg>
          <button type="button" aria-label="关闭标签" className="ml-[5px]">
            <Svg size={10}><path d="M1 1l8 8M9 1 1 9" stroke="#c8dde6" strokeWidth="2" /></Svg>
          </button>
        </div>
      </div>
      <div className="h-0.5 shrink-0 bg-[#1d5c73]" />
      <div className="relative min-h-0 flex-1 overflow-hidden bg-white">
        <Scene />
        <div className="absolute top-2 left-[716px] flex h-[31px] w-[74px] border-b border-[#dcdcdc]">
          <button type="button" aria-label="定向视图" className="flex flex-1 items-center justify-center gap-[7px] pb-1 pl-1">
            <Svg size={22}>
              <circle cx="11" cy="11" r="9" stroke="#444" strokeWidth="1.200" />
              <path d="M11 0v7M8.500 4.500 11 7l2.500-2.500M11 22v-7M8.500 17.500 11 15l2.500 2.500M0 11h7M4.500 8.500 7 11l-2.500 2.500M22 11h-7M17.500 8.500 15 11l2.500 2.500" stroke="#333" strokeWidth="1.200" />
              <circle cx="11" cy="11" r="3" fill="#e0862a" stroke="none" />
            </Svg>
            <Caret />
          </button>
          <span className="h-[27px] w-px bg-[#dcdcdc]" />
          <button type="button" aria-label="工具栏选项" className="flex w-[15px] items-end justify-center pb-2"><Caret /></button>
        </div>
        <Dialog />
      </div>
    </main>
  )
}

export default function App() {
  return (
    <div className="flex h-screen flex-col overflow-hidden bg-white font-['Noto_Sans','Noto_Sans_CJK_SC',sans-serif] text-[#1c1c1c]">
      <Defs />
      <Header />
      <Ribbon />
      <SelectionBar />
      <div className="flex min-h-0 flex-1 overflow-hidden">
        <Navigator />
        <Viewport />
      </div>
      <footer className="h-6 shrink-0 border-t border-b-2 border-t-[#a0a0a0] border-b-[#2b5c6e] pl-[30px] text-center text-[11px] leading-5 font-bold">
        绕 X-Y 旋转视图
      </footer>
    </div>
  )
}
